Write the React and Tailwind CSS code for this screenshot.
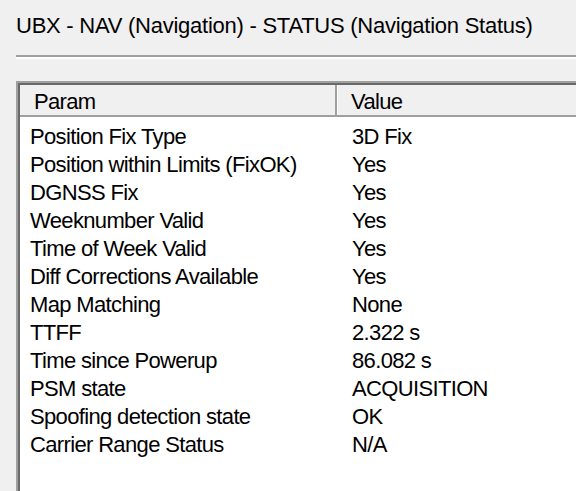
import React from 'react';

const rows = [
    ['Position Fix Type', '3D Fix'],
    ['Position within Limits (FixOK)', 'Yes'],
    ['DGNSS Fix', 'Yes'],
    ['Weeknumber Valid', 'Yes'],
    ['Time of Week Valid', 'Yes'],
    ['Diff Corrections Available', 'Yes'],
    ['Map Matching', 'None'],
    ['TTFF', '2.322 s'],
    ['Time since Powerup', '86.082 s'],
    ['PSM state', 'ACQUISITION'],
    ['Spoofing detection state', 'OK'],
    ['Carrier Range Status', 'N/A'],
];

export default function App() {
    return (
        <div className="w-[576px] h-[491px] bg-[#f0f0f0] overflow-hidden flex flex-col font-['Liberation_Sans',Arial,sans-serif] text-[22px] text-black">
            <div className="pl-4 pt-[12px] leading-[28px] tracking-[-0.25px] whitespace-nowrap">
                UBX - NAV (Navigation) - STATUS (Navigation Status)
            </div>

            <div className="ml-4 mt-[15px] h-[2px] bg-[#a0a0a0]" />
            <div className="ml-4 h-[2px] bg-white" />

            <div className="ml-4 mt-[22px] flex-1 border-l-2 border-t-2 border-[#a0a0a0] flex flex-col">
                <div className="flex-1 border-l-2 border-t-2 border-[#696969] bg-white flex flex-col">
                    <div className="flex h-[32px] bg-[#f0f0f0] border-b-2 border-[#a0a0a0] tracking-[-0.65px] whitespace-nowrap">
                        <div className="w-[317px] pl-[14px] pt-[3px] leading-[28px] border-r-2 border-[#a0a0a0]">Param</div>
                        <div className="w-px bg-white" />
                        <div className="flex-1 pl-[13px] pt-[3px] leading-[28px]">Value</div>
                    </div>

                    <div className="pt-[6px] tracking-[-0.65px]">
                        {rows.map(([param, value]) => (
                            <div key={param} className="flex leading-[28px] whitespace-nowrap">
                                <div className="w-[332px] pl-[10px]">{param}</div>
                                <div className="flex-1">{value}</div>
                            </div>
                        ))}
                    </div>
                </div>
            </div>
        </div>
    );
}
